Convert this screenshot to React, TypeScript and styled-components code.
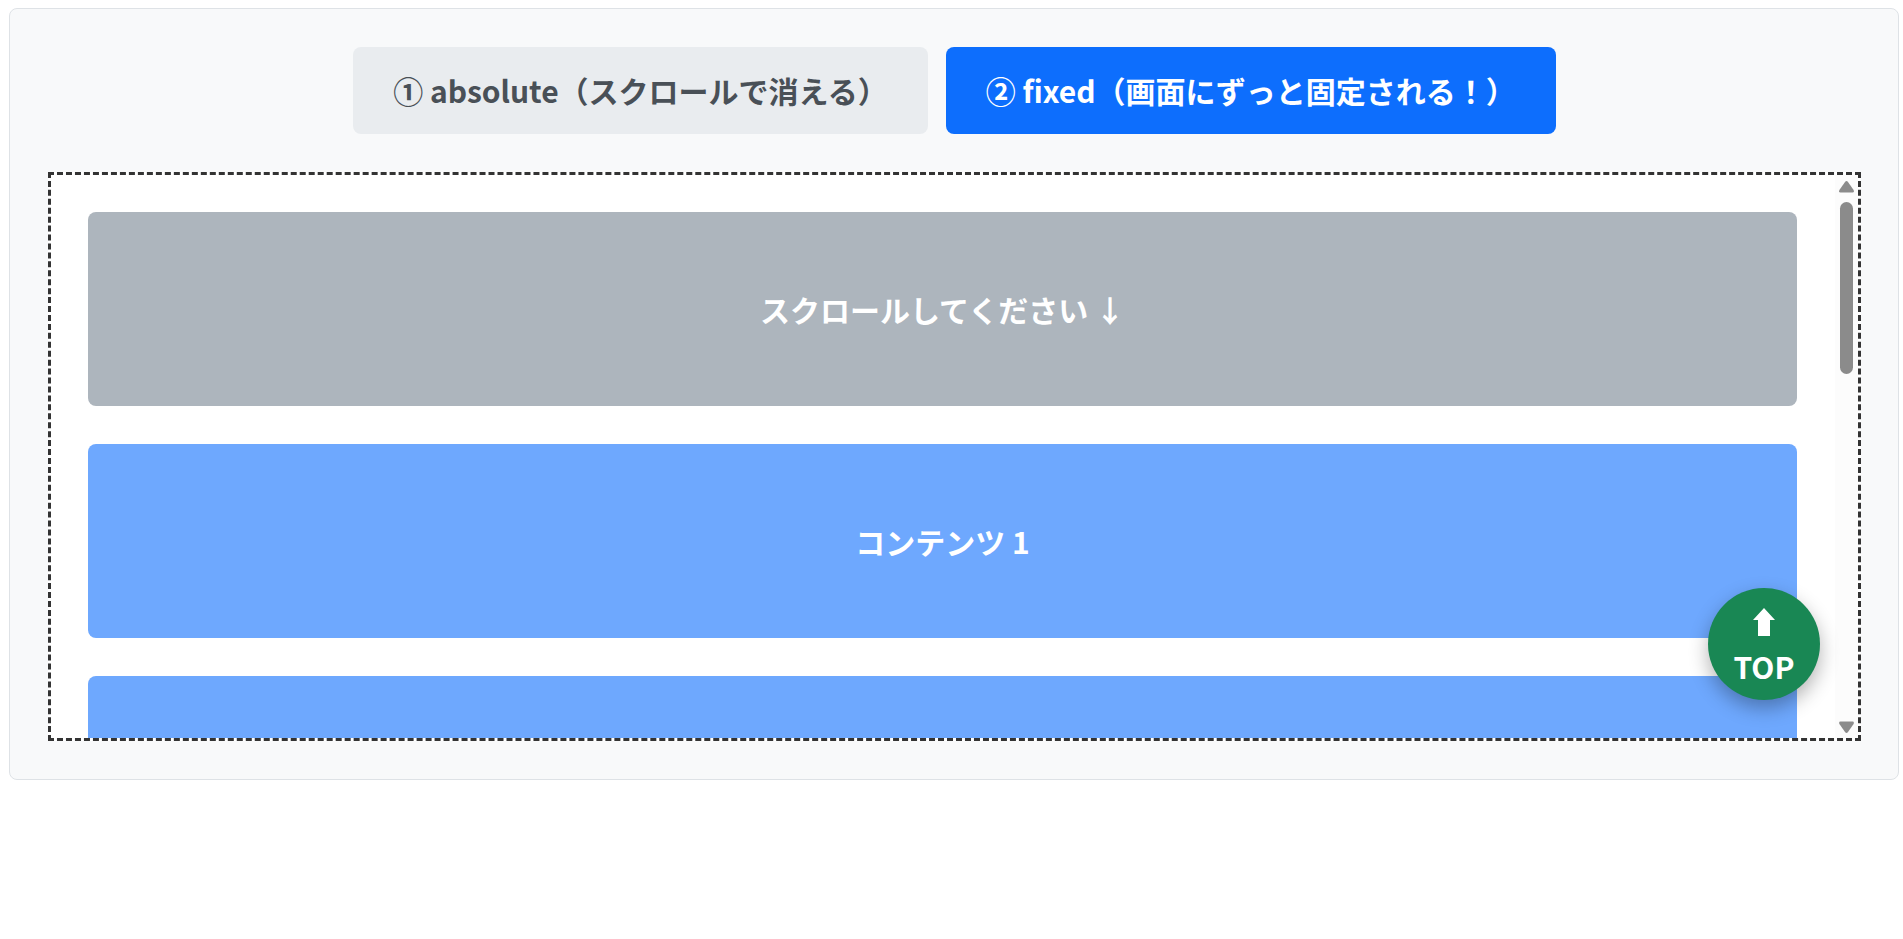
import React, { useEffect, useRef, useState } from "react";
import styled, { createGlobalStyle } from "styled-components";

const GlobalStyle = createGlobalStyle`
  *, *::before, *::after { box-sizing: border-box; }
  body {
    margin: 8px 4px 8px 9px;
    background: #fff;
    font-family: "Noto Sans CJK JP", "Noto Sans", sans-serif;
    font-size: 30px;
    line-height: 44px;
  }
`;

const Panel = styled.main`
  display: flex;
  flex-direction: column;
  gap: 38px;
  padding: 38px 37px 38px 38px;
  background: #f8f9fa;
  border: 1px solid #dee2e6;
  border-radius: 8px;
`;

const ModeBar = styled.div`
  display: flex;
  flex-wrap: wrap;
  justify-content: center;
  gap: 18px;
`;

const ModeButton = styled.button<{ $active: boolean }>`
  padding: 22px 40px;
  border: 0;
  border-radius: 8px;
  background: ${({ $active }) => ($active ? "#0d6efd" : "#e9ecef")};
  color: ${({ $active }) => ($active ? "#fff" : "#495057")};
  font: inherit;
  font-weight: 700;
  line-height: 43px;
  cursor: pointer;
`;

const Stage = styled.section`
  position: relative;
  display: flex;
  border: 3px dashed #333;
  background: #fff;
`;

const Viewport = styled.div`
  flex: 1;
  position: relative;
  height: 563px;
  overflow-y: auto;
  scrollbar-width: none;
`;

const Cards = styled.div`
  display: flex;
  flex-direction: column;
  gap: 38px;
  padding: 37px 38px 37px 37px;
`;

const Card = styled.div<{ $intro?: boolean }>`
  padding: 75px 38px;
  border-radius: 8px;
  background: ${({ $intro }) => ($intro ? "#adb5bd" : "#6ea8fe")};
  color: #fff;
  font-weight: 700;
  text-align: center;
`;

const TopButton = styled.button<{ $inside: boolean }>`
  position: absolute;
  right: ${({ $inside }) => ($inside ? "15px" : "38px")};
  bottom: 38px;
  z-index: 1;
  display: flex;
  flex-direction: column;
  align-items: center;
  justify-content: center;
  width: 112px;
  height: 112px;
  padding: 0;
  border: 0;
  border-radius: 50%;
  background: #198754;
  box-shadow: 0 8px 19px rgba(0, 0, 0, 0.3);
  color: #fff;
  font: inherit;
  font-weight: 700;
  cursor: pointer;
`;

const ArrowLine = styled.span`
  display: flex;
  align-items: center;
  height: 44px;
`;

const ScrollBar = styled.div`
  display: flex;
  flex-direction: column;
  align-items: center;
  width: 23px;
  padding: 6px 0 5px;
  background: #fcfcfc;
`;

const ScrollTrack = styled.div`
  flex: 1;
  width: 13px;
  margin: 9px 0;
`;

const ScrollThumb = styled.div`
  height: 172px;
  border-radius: 7px;
  background: #8b8b8b;
`;

const contents = [1, 2, 3, 4, 5, 6];

type Mode = "absolute" | "fixed";

export default function App() {
  const [mode, setMode] = useState<Mode>("fixed");
  const [progress, setProgress] = useState(0);
  const viewport = useRef<HTMLDivElement>(null);
  const track = useRef<HTMLDivElement>(null);
  const [travel, setTravel] = useState(0);

  useEffect(() => {
    if (track.current) setTravel(track.current.clientHeight - 172);
  }, []);

  const onScroll = () => {
    const el = viewport.current;
    if (el) setProgress(el.scrollTop / Math.max(1, el.scrollHeight - el.clientHeight));
  };

  const topButton = (
    <TopButton
      $inside={mode === "absolute"}
      onClick={() => viewport.current?.scrollTo({ top: 0, behavior: "smooth" })}
    >
      <ArrowLine>
        <svg width="22" height="28" viewBox="0 0 22 28" fill="currentColor" aria-hidden="true">
          <path d="M11 0 22 12H17V28H5V12H0Z" />
        </svg>
      </ArrowLine>
      <span>TOP</span>
    </TopButton>
  );

  return (
    <>
      <GlobalStyle />
      <Panel>
        <ModeBar>
          <ModeButton $active={mode === "absolute"} onClick={() => setMode("absolute")}>
            ① absolute（スクロールで消える）
          </ModeButton>
          <ModeButton $active={mode === "fixed"} onClick={() => setMode("fixed")}>
            ② fixed（画面にずっと固定される！）
          </ModeButton>
        </ModeBar>
        <Stage>
          <Viewport ref={viewport} onScroll={onScroll} tabIndex={-1}>
            <Cards>
              <Card $intro>スクロールしてください ↓</Card>
              {contents.map((n) => (
                <Card key={n}>{`コンテンツ ${n}`}</Card>
              ))}
            </Cards>
            {mode === "absolute" && topButton}
          </Viewport>
          <ScrollBar aria-hidden="true">
            <svg width="15" height="12" viewBox="0 0 15 12" fill="#8b8b8b">
              <path d="M6 1Q7.500-.8 9 1L14.600 9Q15.500 11.500 13.500 11.500H1.500Q-.5 11.500.4 9Z" />
            </svg>
            <ScrollTrack ref={track}>
              <ScrollThumb style={{ transform: `translateY(${progress * travel}px)` }} />
            </ScrollTrack>
            <svg width="15" height="12" viewBox="0 0 15 12" fill="#8b8b8b">
              <path d="M6 11Q7.500 12.800 9 11L14.600 3Q15.500.5 13.500.5H1.500Q-.5.5.4 3Z" />
            </svg>
          </ScrollBar>
          {mode === "fixed" && topButton}
        </Stage>
      </Panel>
    </>
  );
}
